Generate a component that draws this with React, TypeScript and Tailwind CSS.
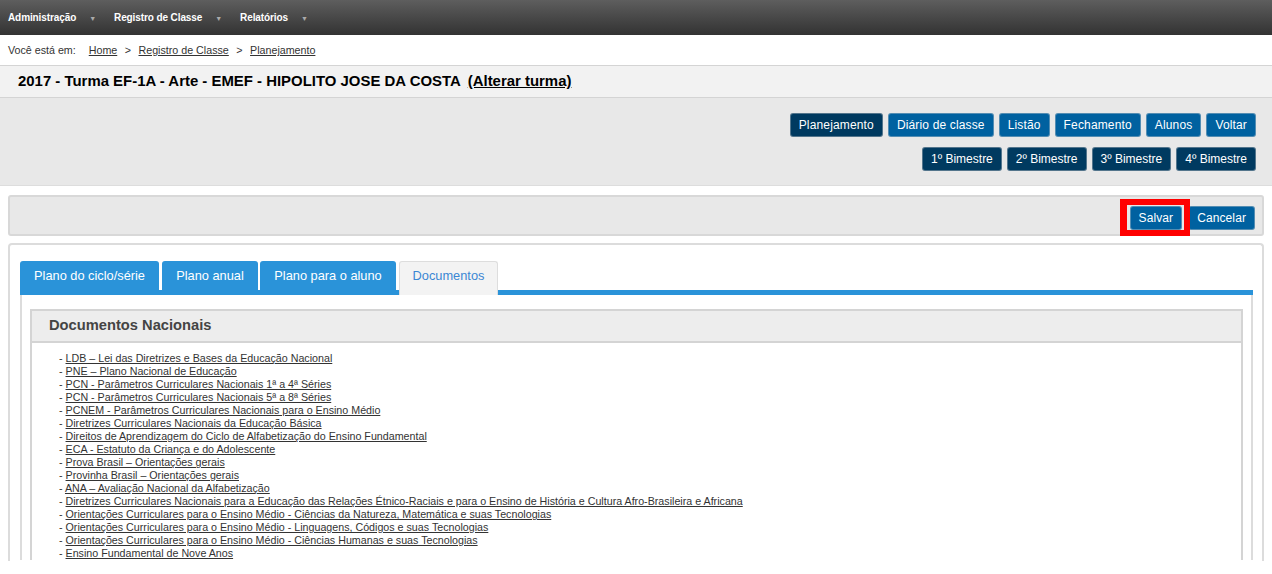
const menus = ['Administração', 'Registro de Classe', 'Relatórios'];

const docs = [
  'LDB – Lei das Diretrizes e Bases da Educação Nacional',
  'PNE – Plano Nacional de Educação',
  'PCN - Parâmetros Curriculares Nacionais 1ª a 4ª Séries',
  'PCN - Parâmetros Curriculares Nacionais 5ª a 8ª Séries',
  'PCNEM - Parâmetros Curriculares Nacionais para o Ensino Médio',
  'Diretrizes Curriculares Nacionais da Educação Básica',
  'Direitos de Aprendizagem do Ciclo de Alfabetização do Ensino Fundamental',
  'ECA - Estatuto da Criança e do Adolescente',
  'Prova Brasil – Orientações gerais',
  'Provinha Brasil – Orientações gerais',
  'ANA – Avaliação Nacional da Alfabetização',
  'Diretrizes Curriculares Nacionais para a Educação das Relações Étnico-Raciais e para o Ensino de História e Cultura Afro-Brasileira e Africana',
  'Orientações Curriculares para o Ensino Médio - Ciências da Natureza, Matemática e suas Tecnologias',
  'Orientações Curriculares para o Ensino Médio - Linguagens, Códigos e suas Tecnologias',
  'Orientações Curriculares para o Ensino Médio - Ciências Humanas e suas Tecnologias',
  'Ensino Fundamental de Nove Anos',
];

function Btn({ label, dark }: { label: string; dark?: boolean }) {
  return (
    <a className={`h-[24px] px-[8px] flex items-center rounded-[3px] border border-[#d0d0d0]/40 text-white text-[12px] ${dark ? 'bg-[#003a60]' : 'bg-[#0061a0]'}`}>
      {label}
    </a>
  );
}

export default function App() {
  return (
    <div className="h-[574px] overflow-hidden bg-white font-['Liberation_Sans',Arial,sans-serif] text-[10.7px]">
      <div className="h-[35px] bg-gradient-to-b from-[#5e5e5e] to-[#333333] flex items-center pl-[8px] text-white text-[10px] font-bold tracking-[-0.1px]">
        {menus.map((m) => (
          <div key={m} className="flex items-center mr-[18px]">
            <span>{m}</span>
            <span className="ml-[13px] mt-[3px] text-[7px] text-[#aaaaaa]">▼</span>
          </div>
        ))}
      </div>

      <div className="h-[30px] flex items-center pl-[8px] text-[#333333]">
        <span className="mr-[13px]">Você está em:</span>
        <a className="underline">Home</a>
        <span className="mx-[7.5px]">&gt;</span>
        <a className="underline">Registro de Classe</a>
        <span className="mx-[7.5px]">&gt;</span>
        <a className="underline">Planejamento</a>
      </div>

      <div className="h-[33px] bg-[#f2f2f2] border-y border-[#d4d4d4] flex items-center pl-[18px] text-[14.93px] font-bold text-black">
        <span>2017 - Turma EF-1A - Arte - EMEF - HIPOLITO JOSE DA COSTA</span>
        <a className="underline ml-[7px]">(Alterar turma)</a>
      </div>

      <div className="h-[88px] bg-[#e8e8e8] border-b border-[#dddddd] pt-[15px] pr-[16px] flex flex-col items-end gap-[10px]">
        <div className="flex gap-[5px] tracking-[0.15px]">
          <Btn label="Planejamento" dark />
          <Btn label="Diário de classe" />
          <Btn label="Listão" />
          <Btn label="Fechamento" />
          <Btn label="Alunos" />
          <Btn label="Voltar" />
        </div>
        <div className="flex gap-[5px]">
          <Btn label="1º Bimestre" dark />
          <Btn label="2º Bimestre" dark />
          <Btn label="3º Bimestre" dark />
          <Btn label="4º Bimestre" dark />
        </div>
      </div>

      <div className="px-[8px] pt-[9px]">
        <div className="h-[41px] bg-[#e8e8e8] border-2 border-[#d8d8d8] rounded-[3px] flex items-end justify-end gap-[6px] pr-[7px] pb-[4px] tracking-[0.1px]">
          <div className="relative">
            <Btn label="Salvar" />
            <span className="absolute -left-[10px] -right-[8px] -top-[7px] -bottom-[6px] border-[6px] border-l-[7px] border-[#ff0000]"></span>
          </div>
          <Btn label="Cancelar" />
        </div>

        <div className="mt-[7px] h-[318px] overflow-hidden border-2 border-b-0 border-[#dcdcdc] rounded-t-[4px] pl-[10px] pr-[9px] pt-[16px]">
          <div className="flex h-[34px] text-[12.8px] border-b-[5px] border-[#2a93d9]">
            <a className="w-[139px] h-[29px] flex items-center justify-center bg-[#2a93d9] text-white rounded-t-[3px]">Plano do ciclo/série</a>
            <a className="w-[96px] ml-[3px] h-[29px] flex items-center justify-center bg-[#2a93d9] text-white rounded-t-[3px]">Plano anual</a>
            <a className="w-[136px] ml-[2px] h-[29px] flex items-center justify-center bg-[#2a93d9] text-white rounded-t-[3px]">Plano para o aluno</a>
            <a className="w-[99px] ml-[3px] h-[34px] flex items-center justify-center bg-[#f3f3f3] text-[#3b87d4] border-x border-t border-[#dddddd] rounded-t-[3px] pb-[5px]">Documentos</a>
          </div>
          <div className="border-x-2 border-[#dcdcdc] px-[8px] pt-[14px]">
            <div className="border-2 border-b-0 border-[#d4d4d4]">
              <div className="h-[32px] bg-[#ededed] border-b-2 border-[#d4d4d4] flex items-center pl-[17px] pb-[2px] text-[14.7px] font-bold text-[#444444]">
                Documentos Nacionais
              </div>
              <ul className="pl-[27px] pt-[9px] text-[#333333] text-[10.7px] leading-[13px]">
                {docs.map((d) => (
                  <li key={d}>
                    - <a className="underline">{d}</a>
                  </li>
                ))}
              </ul>
            </div>
          </div>
        </div>
      </div>
    </div>
  );
}
